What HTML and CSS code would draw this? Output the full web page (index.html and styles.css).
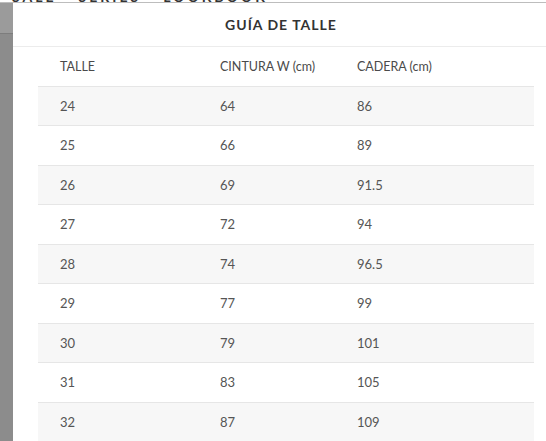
FILE: index.html
```html
<!DOCTYPE html>
<html lang="es">
<head>
<meta charset="utf-8">
<title>Guía de talle</title>
<link rel="stylesheet" href="styles.css">
</head>
<body>
<div class="page">
  <div class="backdrop-top"><span>SALE</span><span>SERIES</span><span>LOOKBOOK</span></div>
  <div class="shell">
    <div class="side"><div class="side-top"></div><div class="side-bottom"></div></div>
    <div class="modal">
      <div class="modal-head">GUÍA DE TALLE</div>
      <table class="sizes">
        <thead>
          <tr><th>TALLE</th><th>CINTURA W (cm)</th><th>CADERA (cm)</th></tr>
        </thead>
        <tbody>
          <tr><td>24</td><td>64</td><td>86</td></tr>
          <tr><td>25</td><td>66</td><td>89</td></tr>
          <tr><td>26</td><td>69</td><td>91.5</td></tr>
          <tr><td>27</td><td>72</td><td>94</td></tr>
          <tr><td>28</td><td>74</td><td>96.5</td></tr>
          <tr><td>29</td><td>77</td><td>99</td></tr>
          <tr><td>30</td><td>79</td><td>101</td></tr>
          <tr><td>31</td><td>83</td><td>105</td></tr>
          <tr><td>32</td><td>87</td><td>109</td></tr>
        </tbody>
      </table>
    </div>
  </div>
</div>
</body>
</html>
```

FILE: styles.css
```css
* { box-sizing: border-box; }
html, body { margin: 0; padding: 0; }
body {
  width: 546px;
  height: 441px;
  overflow: hidden;
  background: #fff;
  font-family: Lato, "Open Sans", sans-serif;
}
.page { width: 546px; height: 441px; overflow: hidden; }
.backdrop-top {
  height: 3px;
  overflow: hidden;
  background: #fff;
  border-bottom: 1px solid #bdbdbd;
  display: flex;
  gap: 22px;
  padding-left: 12px;
  line-height: 0;
}
.backdrop-top span {
  font-size: 14px;
  font-weight: 700;
  letter-spacing: 3px;
  color: #333;
  display: block;
  line-height: 14px;
  margin-top: -10px;
}
.shell { display: flex; height: 438px; }
.side { width: 13px; flex: none; display: flex; flex-direction: column; }
.side-top { height: 31px; background: #9b9b9b; border-bottom: 1px solid #7d7d7d; }
.side-bottom { flex: 1; background: #8c8c8c; }
.modal {
  width: 536px;
  flex: none;
  background: #fff;
}
.modal-head {
  height: 44px;
  border-bottom: 1px solid #ececec;
  text-align: center;
  font-size: 14px;
  font-weight: 700;
  letter-spacing: 1px;
  color: #333;
  line-height: 43px;
}
.sizes {
  margin-left: 25px;
  width: 496px;
  border-collapse: collapse;
  font-size: 13px;
  color: #555;
}
.sizes th, .sizes td {
  text-align: left;
  font-weight: 400;
  padding: 0 0 0 22px;
  border-bottom: 1px solid #e6e6e6;
}
.sizes th { height: 39px; color: #4a4a4a; font-size: 12.5px; }
.sizes td { height: 39.5px; }
.sizes th:nth-child(1) { width: 160px; }
.sizes th:nth-child(2) { width: 137px; }
.sizes tbody tr:nth-child(odd) { background: #f7f7f7; }
```
